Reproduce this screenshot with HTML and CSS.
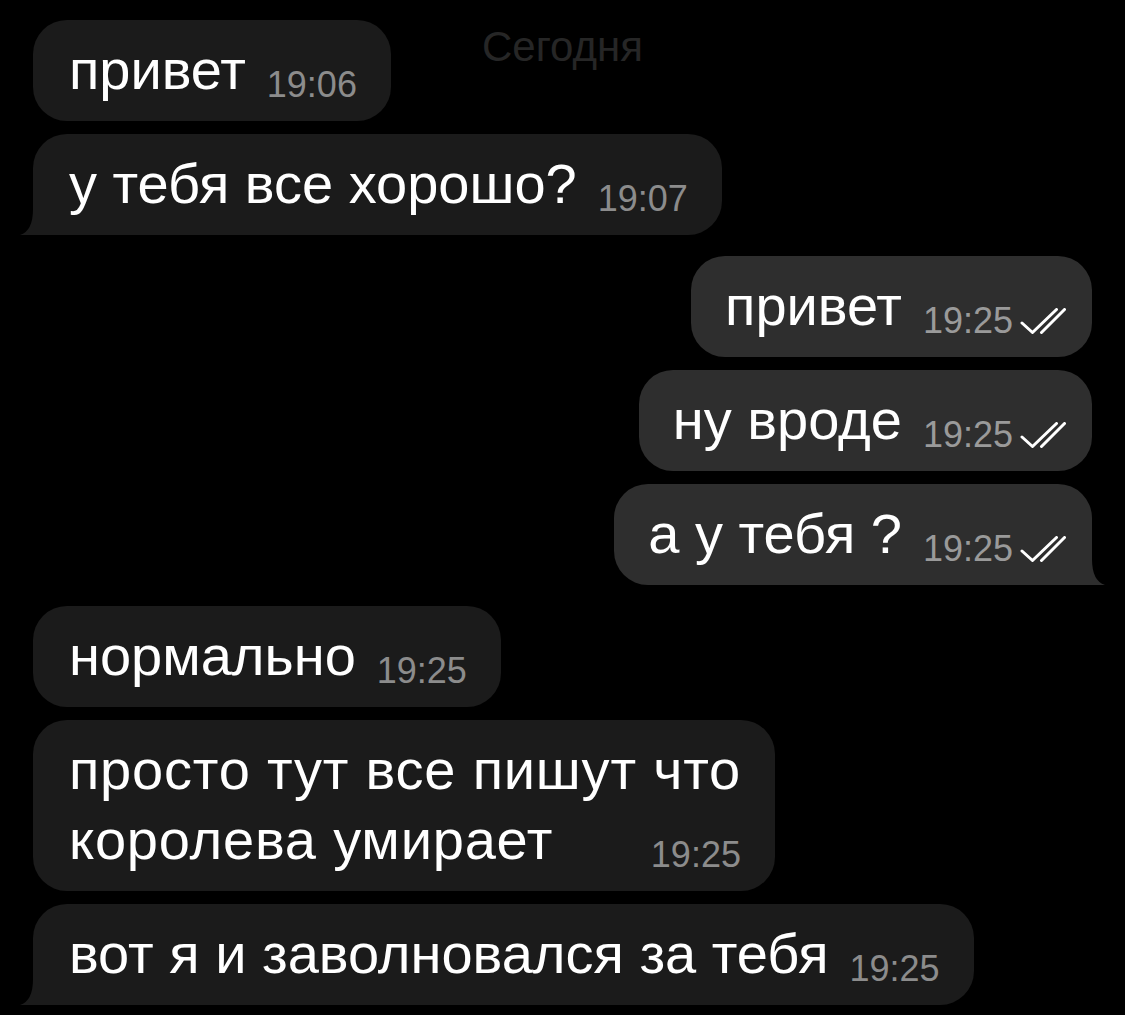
FILE: index.html
```html
<!DOCTYPE html>
<html lang="ru">
<head>
  <meta charset="UTF-8" />
  <meta name="viewport" content="width=device-width, initial-scale=1.0"/>
  <title>Чат</title>
  <link rel="stylesheet" href="styles.css">
</head>
<body>
  <div class="chat">
    <div class="date">Сегодня</div>

    <!-- incoming -->
    <div class="group in">
      <div class="bubble">привет<span class="time">19:06</span></div>
      <div class="bubble has-tail">у тебя все хорошо?<span class="time">19:07</span>
        <svg class="tail" viewBox="0 0 16 26"><path d="M13 0 Q13 22 0 26 L16 26 L16 0 Z"/></svg>
      </div>
    </div>

    <!-- outgoing -->
    <div class="group out">
      <div class="bubble">привет<span class="time">19:25<svg class="check" viewBox="0 0 46 26"><path d="M2 15 L12.5 24.5 L36.5 1.5 M21.5 24.5 L44.5 1.5"/></svg></span></div>
      <div class="bubble">ну вроде<span class="time">19:25<svg class="check" viewBox="0 0 46 26"><path d="M2 15 L12.5 24.5 L36.5 1.5 M21.5 24.5 L44.5 1.5"/></svg></span></div>
      <div class="bubble has-tail">а у тебя ?<span class="time">19:25<svg class="check" viewBox="0 0 46 26"><path d="M2 15 L12.5 24.5 L36.5 1.5 M21.5 24.5 L44.5 1.5"/></svg></span>
        <svg class="tail" viewBox="0 0 16 26"><path d="M3 0 Q3 22 16 26 L0 26 L0 0 Z"/></svg>
      </div>
    </div>

    <!-- incoming -->
    <div class="group in">
      <div class="bubble">нормально<span class="time">19:25</span></div>
      <div class="bubble long">просто тут все пишут что<br><span class="time float">19:25</span>королева умирает</div>
      <div class="bubble has-tail">вот я и заволновался за тебя<span class="time">19:25</span>
        <svg class="tail" viewBox="0 0 16 26"><path d="M13 0 Q13 22 0 26 L16 26 L16 0 Z"/></svg>
      </div>
    </div>
  </div>
</body>
</html>
```

FILE: styles.css
```css
* {
  box-sizing: border-box;
}

body {
  margin: 0;
  background: #000;
  font-family: "Liberation Sans", Arial, sans-serif;
  color: #fff;
}

.chat {
  position: relative;
  display: flex;
  flex-direction: column;
  gap: 21px;
  padding: 20px 33px;
}

.date {
  position: absolute;
  top: 27px;
  left: 0;
  right: 0;
  text-align: center;
  font-size: 42px;
  line-height: 40px;
  color: #262626;
}

.group {
  display: flex;
  flex-direction: column;
  gap: 13px;
}

.group.in {
  align-items: flex-start;
}

.group.out {
  align-items: flex-end;
}

.bubble {
  position: relative;
  font-size: 56px;
  line-height: 70px;
  padding: 15px 34px 16px 36px;
  border-radius: 34px;
  white-space: nowrap;
}

.bubble.long {
  letter-spacing: 0.8px;
}

.in .bubble {
  background: #1b1b1b;
}

.out .bubble {
  background: #2e2e2e;
  padding: 15px 26px 16px 34px;
}

.time {
  font-size: 36px;
  line-height: 1;
  letter-spacing: 0;
  margin-left: 21px;
  vertical-align: -8px;
  color: #8c8c8c;
}

.out .time {
  color: #9a9a9a;
}

.time.float {
  float: right;
  margin-top: 32px;
  vertical-align: baseline;
}

.check {
  width: 46px;
  height: 26px;
  margin-left: 7px;
  vertical-align: -1px;
  fill: none;
  stroke: #fff;
  stroke-width: 3;
  stroke-linecap: round;
  stroke-linejoin: round;
}

.tail {
  position: absolute;
  bottom: 0;
  width: 16px;
  height: 26px;
}

.in .has-tail {
  border-bottom-left-radius: 0;
}

.in .tail {
  left: -13px;
  fill: #1b1b1b;
}

.out .has-tail {
  border-bottom-right-radius: 0;
}

.out .tail {
  right: -13px;
  fill: #2e2e2e;
}
```
